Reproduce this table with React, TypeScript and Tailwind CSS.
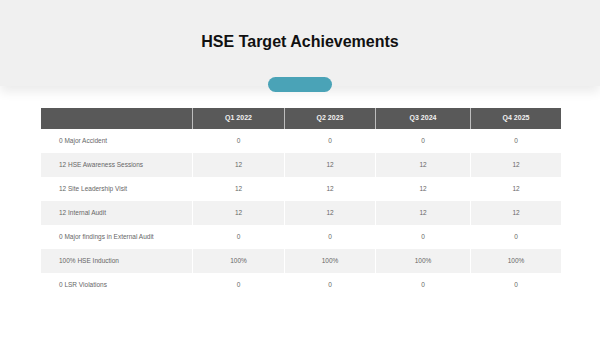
const quarters = ['Q1 2022', 'Q2 2023', 'Q3 2024', 'Q4 2025'];

const rows: { label: string; value: string }[] = [
  { label: '0 Major Accident', value: '0' },
  { label: '12 HSE Awareness Sessions', value: '12' },
  { label: '12 Site Leadership Visit', value: '12' },
  { label: '12 Internal Audit', value: '12' },
  { label: '0 Major findings in External Audit', value: '0' },
  { label: '100% HSE Induction', value: '100%' },
  { label: '0 LSR Violations', value: '0' },
];

const cols = 'grid grid-cols-[151px_92px_91px_95px_91px]';

export default function App() {
  return (
    <div
      className="w-[600px] h-[338px] bg-white overflow-hidden"
      style={{ fontFamily: '"Liberation Sans", Arial, sans-serif' }}
    >
      {/* Title band */}
      <div className="h-[86px] bg-[#f0f0f0] shadow-[0_6px_10px_rgba(0,0,0,0.08)] pt-[32px]">
        <h1 className="text-center text-[16px] leading-[20px] font-bold text-[#111]">
          HSE Target Achievements
        </h1>
      </div>
      <div className="relative z-10 flex justify-center -mt-[9px]">
        <div className="w-[64px] h-[15px] rounded-full bg-[#4aa3b7]" />
      </div>

      {/* Table */}
      <div className="ml-[41px] mt-[16px] w-[520px]">
        <div className={`${cols} h-[21px] bg-[#595959] text-[#f2f2f2] text-[7px] font-bold`}>
          <div />
          {quarters.map((q) => (
            <div key={q} className="flex items-center justify-center border-l border-[#bdbdbd]">
              {q}
            </div>
          ))}
        </div>
        {rows.map((r, i) => (
          <div
            key={r.label}
            className={`${cols} h-[24px] text-[6.5px] text-[#666] ${
              i % 2 === 1 ? 'bg-[#f2f2f2]' : 'bg-white'
            }`}
          >
            <div className="flex items-center pl-[18px]">{r.label}</div>
            {quarters.map((q) => (
              <div key={q} className="flex items-center justify-center border-l border-white">
                {r.value}
              </div>
            ))}
          </div>
        ))}
      </div>
    </div>
  );
}
